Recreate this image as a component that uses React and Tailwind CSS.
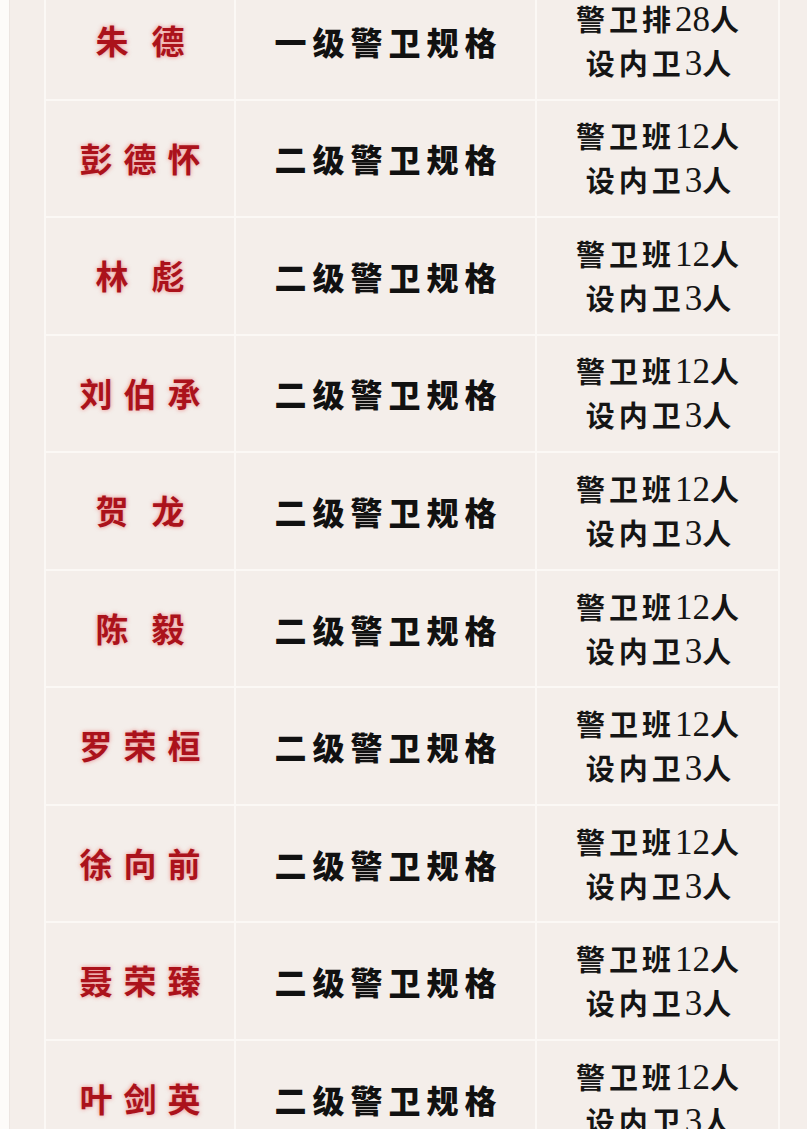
const rows = [
  { name: "朱德", spec: "一级警卫规格", line1: "警卫排", num: "28" },
  { name: "彭德怀", spec: "二级警卫规格", line1: "警卫班", num: "12" },
  { name: "林彪", spec: "二级警卫规格", line1: "警卫班", num: "12" },
  { name: "刘伯承", spec: "二级警卫规格", line1: "警卫班", num: "12" },
  { name: "贺龙", spec: "二级警卫规格", line1: "警卫班", num: "12" },
  { name: "陈毅", spec: "二级警卫规格", line1: "警卫班", num: "12" },
  { name: "罗荣桓", spec: "二级警卫规格", line1: "警卫班", num: "12" },
  { name: "徐向前", spec: "二级警卫规格", line1: "警卫班", num: "12" },
  { name: "聂荣臻", spec: "二级警卫规格", line1: "警卫班", num: "12" },
  { name: "叶剑英", spec: "二级警卫规格", line1: "警卫班", num: "12" },
];

const cjk = "font-['Noto_Sans_CJK_SC',sans-serif]";

export default function App() {
  return (
    <div className="w-[807px] h-[1129px] overflow-hidden bg-[#f4eeea] flex">
      <div className="w-[10px] bg-[#fdfbf9] border-r border-[#ece5e1] shrink-0" />
      <div className="w-[34px] shrink-0" />
      <div className="flex flex-col -mt-[17px] w-[736px] border-l-2 border-r-2 border-[#fbf8f5] shrink-0">
        {rows.map((r, i) => {
          const two = r.name.length === 2;
          return (
            <div
              key={i}
              className="flex h-[117.55px] shrink-0 border-b-2 border-[#fbf8f5]"
            >
              <div
                className={`w-[190px] flex items-center justify-center border-r-2 border-[#fbf8f5] text-[33px] font-bold text-[#ab121b] whitespace-pre [text-shadow:0_0_4px_rgba(225,50,50,0.55)] ${cjk}`}
              >
                {two ? (
                  <span className="tracking-[23px] pl-[23px]">{r.name}</span>
                ) : (
                  <span className="tracking-[11px] pl-[11px]">{r.name}</span>
                )}
              </div>
              <div
                className={`w-[301px] flex items-center justify-center border-r-2 border-[#fbf8f5] text-[32px] font-black text-[#111] tracking-[6px] ${cjk}`}
              >
                <span className="pl-[6px]">{r.spec}</span>
              </div>
              <div className="flex-1 flex flex-col items-center justify-center text-[#151515] font-['Liberation_Serif','Noto_Sans_CJK_SC',serif] leading-[42px]">
                <div className="flex items-baseline">
                  <span className={`text-[29px] font-bold tracking-[4px] ${cjk}`}>{r.line1}</span>
                  <span className="text-[35px]">{r.num}</span>
                  <span className={`text-[29px] font-bold ${cjk}`}>人</span>
                </div>
                <div className="flex items-baseline pl-[2px]">
                  <span className={`text-[29px] font-bold tracking-[4px] ${cjk}`}>设内卫</span>
                  <span className="text-[35px]">3</span>
                  <span className={`text-[29px] font-bold ${cjk}`}>人</span>
                </div>
              </div>
            </div>
          );
        })}
      </div>
    </div>
  );
}
